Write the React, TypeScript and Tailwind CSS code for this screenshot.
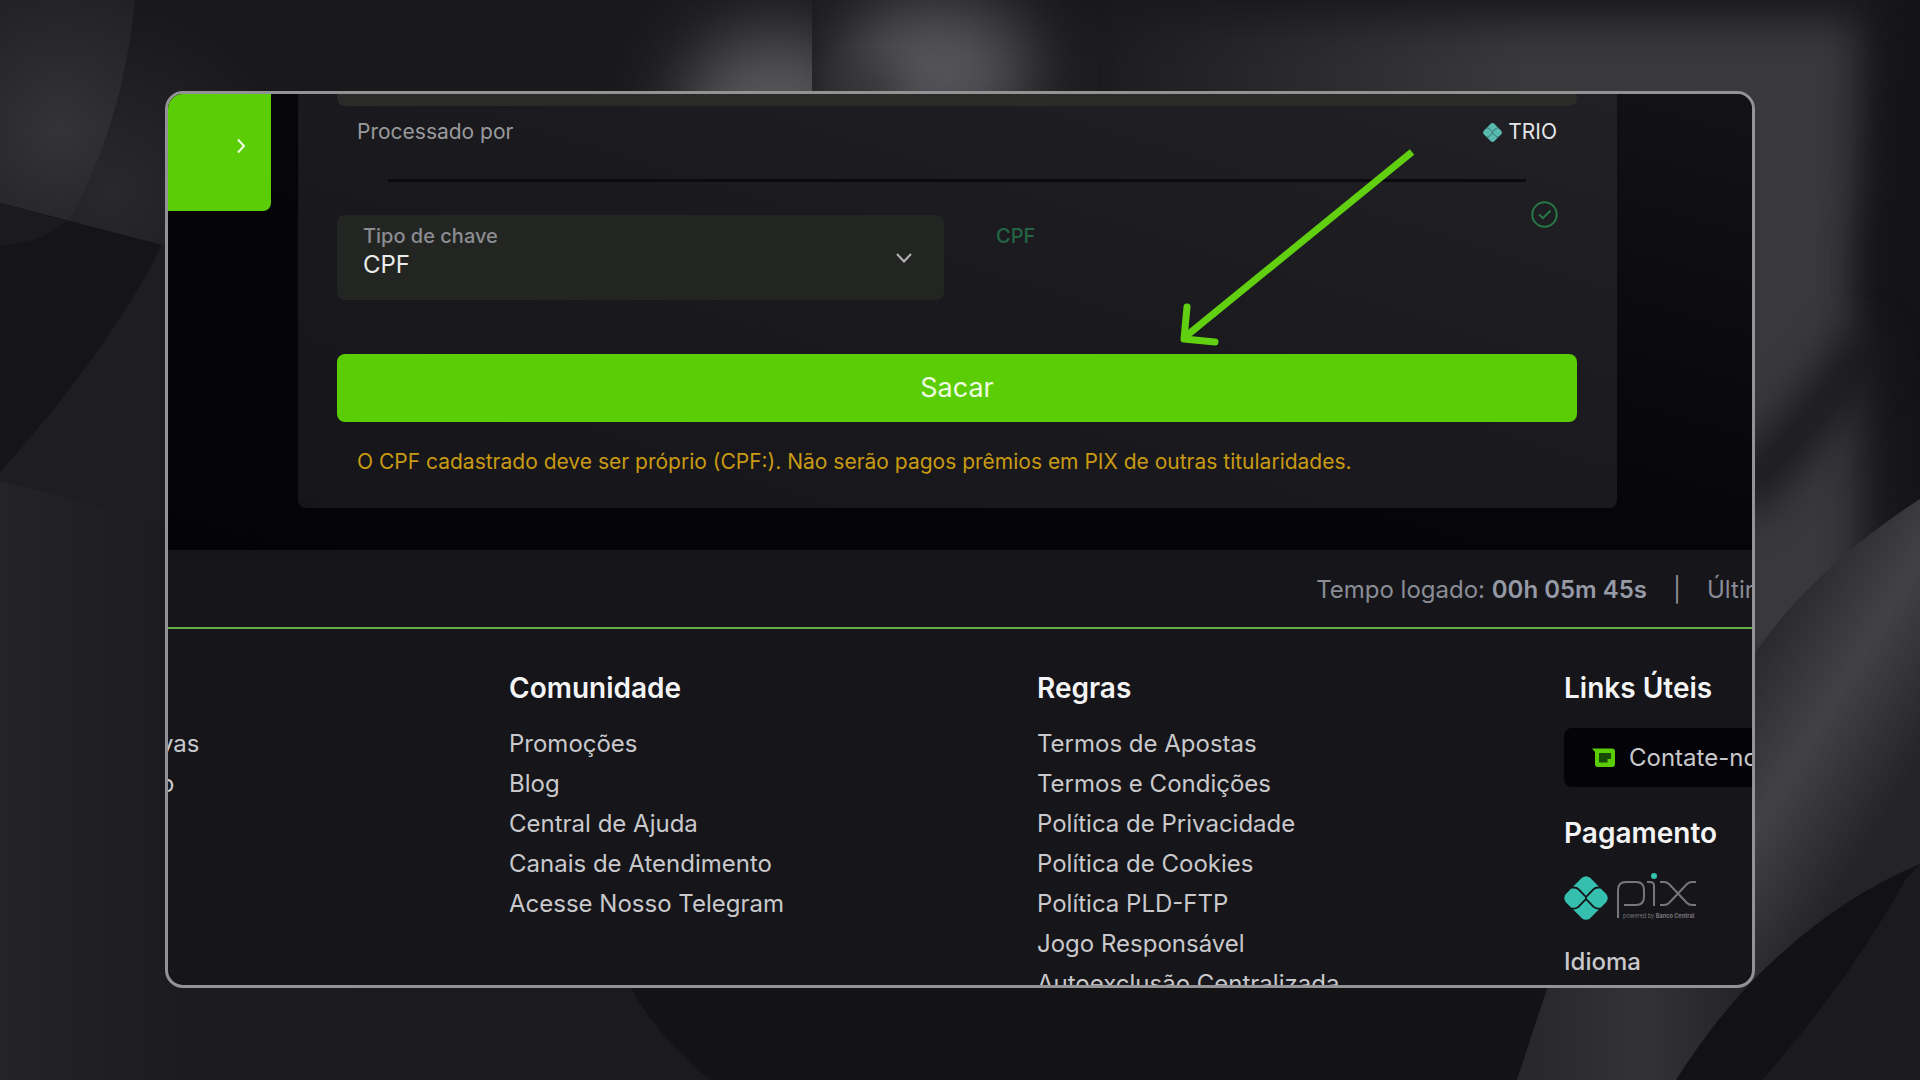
import React from "react";

const community = ["Promoções", "Blog", "Central de Ajuda", "Canais de Atendimento", "Acesse Nosso Telegram"];
const rules = [
  "Termos de Apostas",
  "Termos e Condições",
  "Política de Privacidade",
  "Política de Cookies",
  "Política PLD-FTP",
  "Jogo Responsável",
  "Autoexclusão Centralizada",
];

function Backdrop() {
  return (
    <svg className="absolute inset-0 h-full w-full" viewBox="0 0 1920 1080" preserveAspectRatio="none" aria-hidden="true">
      <defs>
        <filter id="soft20" x="-50%" y="-50%" width="200%" height="200%" colorInterpolationFilters="sRGB">
          <feGaussianBlur stdDeviation="20" />
        </filter>
        <filter id="soft40" x="-50%" y="-50%" width="200%" height="200%" colorInterpolationFilters="sRGB">
          <feGaussianBlur stdDeviation="36" />
        </filter>
        <radialGradient id="leftSheet" gradientUnits="userSpaceOnUse" cx="60" cy="130" r="150">
          <stop offset="0" stopColor="#333338" />
          <stop offset="1" stopColor="#212124" />
        </radialGradient>
        <radialGradient id="leftBand" gradientUnits="userSpaceOnUse" cx="110" cy="190" r="180">
          <stop offset="0" stopColor="#29292b" />
          <stop offset="1" stopColor="#19191c" />
        </radialGradient>
        <linearGradient id="lowerLeft" x1="0" x2="1" y1="0" y2="0">
          <stop offset="0" stopColor="#242428" />
          <stop offset="0.25" stopColor="#1c1c1e" />
          <stop offset="1" stopColor="#1b1b1e" />
        </linearGradient>
        <linearGradient id="lightSheet" gradientUnits="userSpaceOnUse" x1="1080" y1="0" x2="1520" y2="0">
          <stop offset="0" stopColor="#1b1b1e" />
          <stop offset="1" stopColor="#39393c" />
        </linearGradient>
        <linearGradient id="ribbon" gradientUnits="userSpaceOnUse" x1="1750" y1="670" x2="1915" y2="770">
          <stop offset="0" stopColor="#2b2b2e" />
          <stop offset="0.45" stopColor="#424245" />
          <stop offset="1" stopColor="#242428" />
        </linearGradient>
        <linearGradient id="bottomFold" gradientUnits="userSpaceOnUse" x1="1540" y1="0" x2="1740" y2="0">
          <stop offset="0" stopColor="#29292b" />
          <stop offset="0.5" stopColor="#333335" />
          <stop offset="1" stopColor="#252528" />
        </linearGradient>
        <clipPath id="glowLeft">
          <rect x="0" y="0" width="812" height="300" />
        </clipPath>
        <clipPath id="glowRight">
          <rect x="812" y="0" width="1108" height="300" />
        </clipPath>
      </defs>
      <rect width="1920" height="1080" fill="#19191c" />
      <path d="M1080 20 H1860 V680 H1080 Z" fill="url(#lightSheet)" filter="url(#soft20)" />
      <g clipPath="url(#glowLeft)">
        <ellipse cx="775" cy="110" rx="95" ry="80" fill="#58585b" filter="url(#soft40)" />
      </g>
      <g clipPath="url(#glowRight)">
        <ellipse cx="935" cy="70" rx="100" ry="70" fill="#57575b" filter="url(#soft40)" />
        <ellipse cx="862" cy="88" rx="40" ry="20" fill="#333336" filter="url(#soft20)" />
      </g>
      <path d="M1890 -80 H2000 V640 H1890 Q1920 450 1870 320 Q1850 270 1880 180 Z" fill="#141417" filter="url(#soft20)" />
      <path d="M1735 500 Q1800 440 1870 340" fill="none" stroke="#17171a" strokeWidth="44" filter="url(#soft20)" />
      <path d="M135 0 H500 L500 90 L165 260 L0 203 Q110 150 135 0 Z" fill="url(#leftBand)" />
      <path d="M0 0 H135 Q122 130 66 225 L0 203 Z" fill="url(#leftSheet)" />
      <path d="M0 203 L170 247 V540 L0 481 Z" fill="#1e1e22" />
      <path d="M0 203 L162 245 Q110 350 0 472 Z" fill="#151517" />
      <path d="M66 221 L0 203 V245 Q40 245 66 221 Z" fill="#1b1b1e" />
      <path d="M0 481 L170 526 V980 H640 L712 1080 H0 Z" fill="url(#lowerLeft)" />
      <path d="M627 980 H1550 L1517 1080 H710 Q650 1030 627 980 Z" fill="#131316" />
      <path d="M1550 980 H1780 L1676 1080 H1517 Z" fill="url(#bottomFold)" />
      <path d="M1920 499 Q1810 570 1750 660 V985 Q1830 900 1920 864 Z" fill="url(#ribbon)" />
      <path d="M1920 864 Q1770 930 1676 1080 H1920 Z" fill="#121215" />
      <path d="M1906 879 Q1850 980 1762 1080 H1920 V864 Z" fill="#1b1b1e" />
    </svg>
  );
}

function PixMark({ className, color, gap }: { className: string; color: string; gap: string }) {
  return (
    <svg className={className} viewBox="0 0 48 48" aria-hidden="true">
      <path
        d="M19.500 2 Q24 -1.500 28.500 2 L46 19.500 Q49.500 24 46 28.500 L28.500 46 Q24 49.500 19.500 46 L2 28.500 Q-1.500 24 2 19.500 Z"
        fill={color}
      />
      <g fill="none" stroke={gap} strokeWidth="2">
        <path d="M7 12.500 H11 Q14 12.500 16 14.500 L22.500 21.500 Q24 23 25.500 21.500 L32 14.500 Q34 12.500 37 12.500 H41" />
        <path d="M7 35.500 H11 Q14 35.500 16 33.500 L22.500 26.500 Q24 25 25.500 26.500 L32 33.500 Q34 35.500 37 35.500 H41" />
        <path d="M24 22 V26" />
      </g>
    </svg>
  );
}

function PixLogo() {
  return (
    <div className="flex items-start gap-2" role="img" aria-label="pix powered by Banco Central">
      <PixMark className="mt-[3px] h-11 w-11" color="#35bfae" gap="#15151a" />
      <svg className="h-12 w-20" viewBox="0 0 80 48" fill="none" stroke="#77777b" strokeWidth="2" aria-hidden="true">
        <path d="M2 45 V17 Q2 9 10 9 H20 Q28 9 28 17 V24 Q28 32 20 32 H8" />
        <path d="M31 9 H34 Q38 9 38 13 V33" />
        <path d="M44 9 H48 Q51 9 53 11 L71 30 Q73 32 76 32 H80" />
        <path d="M44 32 H48 Q51 32 53 30 L71 11 Q73 9 76 9 H80" />
        <circle cx="38" cy="3" r="3" fill="#35bfae" stroke="none" />
        <text x="7" y="45" fontSize="5.600" fill="#77777b" stroke="none" fontFamily="Inter, sans-serif">
          powered by <tspan fontWeight="700">Banco Central</tspan>
        </text>
      </svg>
    </div>
  );
}

function LinkList({ items }: { items: string[] }) {
  return (
    <ul className="mt-[18px]">
      {items.map((item) => (
        <li key={item} className="h-10 text-2xl leading-10">
          <a href="#" className="whitespace-nowrap">
            {item}
          </a>
        </li>
      ))}
    </ul>
  );
}

const heading = "text-[28px] leading-9 font-semibold text-[#f4f4f5]";

export default function App() {
  return (
    <div className="relative flex h-screen overflow-hidden bg-[#19191c] px-[165px] pt-[91px] pb-[92px] font-['Inter',sans-serif]">
      <Backdrop />
      <div className="relative flex min-w-0 flex-1 flex-col overflow-hidden rounded-[18px] border-3 border-[#939395] bg-[#15151a]">
        <main className="flex shrink-0 items-start bg-linear-to-bl from-[#131316] via-[#060609] to-[#040407] pb-[42px]">
          <button
            type="button"
            aria-label="Avançar"
            className="flex h-[117px] w-[103px] shrink-0 items-center justify-end rounded-br-lg bg-[#5bcd06] pr-6 pb-[14px]"
          >
            <svg className="h-4 w-3" viewBox="0 0 12 16" fill="none" stroke="#f1ffe6" strokeWidth="2" aria-hidden="true">
              <path d="M3 1.500 L9 8 L3 14.500" />
            </svg>
          </button>

          <section className="mr-[135px] ml-[27px] min-w-0 flex-1 rounded-b-lg bg-linear-to-bl from-[#202025] via-[#19191e] to-[#15151a] pr-10 pl-[39px]">
            <div className="h-3 rounded-b-lg bg-[#2a2b28]" />
            <div className="flex h-[52px] items-center justify-between px-5 text-[21px]">
              <span className="text-[#99999c]">Processado por</span>
              <span className="flex items-center gap-[6px] text-[#e6e6e8]">
                <PixMark className="h-[19px] w-[19px]" color="#58bab0" gap="#33595a" />
                TRIO
              </span>
            </div>
            <hr className="mx-[51px] mt-[21px] h-[3px] border-0 bg-[#0b0b0f]" />

            <div className="mt-[33px] grid grid-cols-2 gap-[26px]">
              <div className="relative h-[85px] rounded-lg bg-[#232523] px-[26px] pt-[7px]">
                <label htmlFor="tipo" className="block text-xl leading-7 font-medium text-[#8c8d92]">
                  Tipo de chave
                </label>
                <select id="tipo" className="block h-[29px] w-full appearance-none bg-transparent text-2xl leading-7 text-[#ececec]">
                  <option>CPF</option>
                </select>
                <svg
                  className="pointer-events-none absolute top-[37px] right-8 h-3 w-4"
                  viewBox="0 0 16 12"
                  fill="none"
                  stroke="#b4b4b4"
                  strokeWidth="2"
                  aria-hidden="true"
                >
                  <path d="M1 2 L8 9.500 L15 2" />
                </svg>
              </div>
              <div className="flex items-start justify-between pt-[7px] pr-[19px] pl-[26px]">
                <span className="text-xl leading-7 font-medium text-[#246543]">CPF</span>
                <svg
                  className="-mt-[21px] h-[27px] w-[27px]"
                  viewBox="0 0 27 27"
                  fill="none"
                  stroke="#267847"
                  strokeWidth="2"
                  aria-hidden="true"
                >
                  <circle cx="13.500" cy="13.500" r="12.200" />
                  <path d="M8 13.500 L12 17.200 L19.500 9.500" />
                </svg>
              </div>
            </div>

            <div className="relative mt-[54px]">
              <button type="button" className="h-[68px] w-full rounded-lg bg-[#5bcd06] text-[27px] text-[#eefbe3]">
                Sacar
              </button>
              <svg
                className="pointer-events-none absolute right-[157px] bottom-[76px] h-[200px] w-[245px]"
                viewBox="0 0 245 200"
                fill="none"
                stroke="#61d011"
                strokeWidth="7"
                aria-hidden="true"
              >
                <path d="M237 6 L10 191" />
                <path d="M12 161 L9 193 L40 196" strokeLinecap="round" strokeLinejoin="round" />
              </svg>
            </div>
            <p className="px-5 pt-[26px] pb-8 text-[21px] leading-7 whitespace-nowrap text-[#c99a12]">
              O CPF cadastrado deve ser próprio (CPF:). Não serão pagos prêmios em PIX de outras titularidades.
            </p>
          </section>
        </main>

        <footer className="text-[#c9c9cc]">
          <div className="flex h-[79px] items-center justify-end border-b-2 border-[#67ac45] pt-[2px] text-2xl whitespace-nowrap text-[#8a8c96]">
            <span>
              Tempo logado: <b className="font-semibold text-[#969aa6]">00h 05m 45s</b>
            </span>
            <span className="px-[26px]">|</span>
            <span className="w-[45px] overflow-hidden">Último</span>
          </div>

          <div className="grid grid-cols-[341fr_528fr_527fr_188fr] pt-[41px]">
            <ul className="mt-[54px] text-2xl leading-10">
              <li>
                <a href="#" className="-ml-2">
                  vas
                </a>
              </li>
              <li>
                <a href="#" className="-ml-2">
                  o
                </a>
              </li>
            </ul>
            <div className="min-w-0">
              <h2 className={heading}>Comunidade</h2>
              <LinkList items={community} />
            </div>
            <div className="min-w-0">
              <h2 className={heading}>Regras</h2>
              <LinkList items={rules} />
            </div>
            <div className="min-w-0">
              <h2 className={heading}>Links Úteis</h2>
              <a
                href="#"
                className="mt-[22px] flex h-[59px] items-center gap-[14px] overflow-hidden rounded-l-lg bg-[#040408] pl-7 text-2xl whitespace-nowrap"
              >
                <svg className="h-5 w-[23px] shrink-0" viewBox="0 0 23 20" aria-hidden="true">
                  <path d="M0 0.500 H20 Q23 0.500 23 3.500 V16 Q23 19 20 19 H6 Q3 19 3 16 V4 Z" fill="#5bcd06" />
                  <path d="M7 5 H19 V11 H15.500 V14.500 H7 Z" fill="#174a02" />
                </svg>
                Contate-nos
              </a>
              <h2 className="mt-7 text-[28px] leading-9 font-semibold text-[#f4f4f5]">Pagamento</h2>
              <div className="mt-[22px]">
                <PixLogo />
              </div>
              <h2 className="mt-[23px] text-2xl leading-9 font-medium">Idioma</h2>
            </div>
          </div>
        </footer>
      </div>
    </div>
  );
}
